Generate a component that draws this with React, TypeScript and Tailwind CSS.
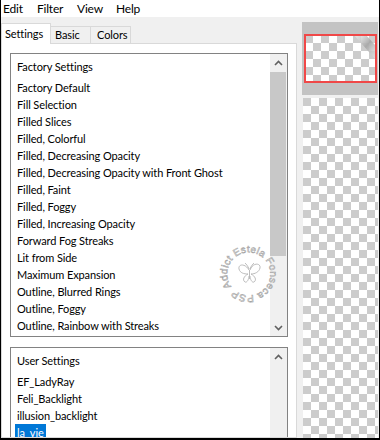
import React from "react";

const factory = [
  "Factory Default",
  "Fill Selection",
  "Filled Slices",
  "Filled, Colorful",
  "Filled, Decreasing Opacity",
  "Filled, Decreasing Opacity with Front Ghost",
  "Filled, Faint",
  "Filled, Foggy",
  "Filled, Increasing Opacity",
  "Forward Fog Streaks",
  "Lit from Side",
  "Maximum Expansion",
  "Outline, Blurred Rings",
  "Outline, Foggy",
  "Outline, Rainbow with Streaks",
];
const user = ["EF_LadyRay", "Feli_Backlight", "illusion_backlight", "la_vie"];

function Chevron({ dir }: { dir: "up" | "down" }) {
  return (
    <svg width="9" height="6" viewBox="0 0 9 6">
      <path
        d={dir === "up" ? "M1 5 L4.5 1.5 L8 5" : "M1 1 L4.5 4.5 L8 1"}
        fill="none"
        stroke="#606060"
        strokeWidth="1.6"
      />
    </svg>
  );
}

function ListBox({
  title,
  items,
  selected,
  full,
}: {
  title: string;
  items: string[];
  selected?: string;
  full?: boolean;
}) {
  return (
    <div
      className={
        full
          ? "flex h-[284px] border border-[#828282] shrink-0"
          : "flex h-[120px] mt-[10px] border border-[#828282] shrink-0"
      }
    >
      <div className="flex-1 pl-[4px] pt-[4px] bg-white">
        <div className="h-[17px] px-[2px]">{title}</div>
        <div className="mt-[4px]">
          {items.map((it) => (
            <div key={it} className="h-[17px]">
              <span
                className={
                  it === selected
                    ? "inline-block h-[17px] px-[2px] bg-[#0078d7] text-white"
                    : "inline-block h-[17px] px-[2px]"
                }
              >
                {it}
              </span>
            </div>
          ))}
        </div>
      </div>
      <div className="w-[17px] bg-[#f0f0f0] flex flex-col">
        <div className="h-[17px] flex items-center justify-center">
          <Chevron dir="up" />
        </div>
        {full && (
          <>
            <div className="mt-[1px] h-[184px] mr-[1px] bg-[#c8c8c8]" />
            <div className="flex-1" />
            <div className="h-[17px] flex items-center justify-center">
              <Chevron dir="down" />
            </div>
          </>
        )}
      </div>
    </div>
  );
}

function Watermark() {
  return (
    <svg
      className="absolute left-[218px] top-[245px] pointer-events-none"
      width="62"
      height="62"
      viewBox="0 0 62 62"
    >
      <defs>
        <path
          id="wmcircle"
          d="M 12.4 41.5 A 21.5 21.5 0 1 1 49.6 20.5 A 21.5 21.5 0 0 1 12.4 41.5"
        />
      </defs>
      <text
        fontSize="10"
        fontFamily="'Liberation Sans', sans-serif"
        fill="#fbfbfb"
        stroke="#a4a4a4"
        strokeWidth="0.55"
      >
        <textPath href="#wmcircle" textLength="130" lengthAdjust="spacing">
          Addict Estela Fonseca PSP
        </textPath>
      </text>
      <g fill="none" stroke="#b4b4b4" strokeWidth="0.9">
        <path d="M30 25 C 26 18, 19 19, 20 24 C 21 28, 25 29, 29 29 C 25 31, 23 35, 26 37 C 28 38, 30 34, 30 31" />
        <path d="M31 25 C 34 17, 42 18, 41 23 C 40 27, 36 29, 32 29 C 36 31, 38 35, 35 37 C 33 38, 31 34, 31 31" />
        <path d="M30.5 25 L 30.5 34" />
        <path d="M30 24 C 29 21, 27 19, 26 18 M31 24 C 32 21, 34 19, 35 18" />
      </g>
    </svg>
  );
}

function Thumb() {
  return (
    <svg width="76" height="73" viewBox="0 0 76 73" className="block">
      <defs>
        <pattern id="chk" x="3" y="13" width="16" height="16" patternUnits="userSpaceOnUse">
          <rect width="16" height="16" fill="#ffffff" />
          <rect width="8" height="8" fill="#cccccc" />
          <rect x="8" y="8" width="8" height="8" fill="#cccccc" />
        </pattern>
        <linearGradient id="streak" x1="0" y1="0" x2="1" y2="1">
          <stop offset="0" stopColor="#f4f4f4" stopOpacity="0.7" />
          <stop offset="0.5" stopColor="#a8a8a8" stopOpacity="0.95" />
          <stop offset="1" stopColor="#e8e8e8" stopOpacity="0.7" />
        </linearGradient>
      </defs>
      <rect width="76" height="73" fill="#c3c3c3" />
      <rect x="3" y="13" width="71" height="47" fill="url(#chk)" />
      <polygon points="52,13 64,13 74,24 74,38" fill="url(#streak)" />
      <rect x="3" y="13" width="71" height="47" fill="none" stroke="#f04848" strokeWidth="2" />
    </svg>
  );
}

export default function App() {
  return (
    <div className="relative w-[380px] h-[440px] overflow-hidden bg-[#f0f0f0] border-l border-r border-b-2 border-black flex flex-col font-['Lato',sans-serif] text-[11px] tracking-[-0.1px] leading-[17px] text-black">
      <div className="h-[17px] bg-white flex pl-[2px] shrink-0 text-[12px] tracking-[-0.2px]">
        <span className="w-[34px]">Edit</span>
        <span className="w-[40px]">Filter</span>
        <span className="w-[39px]">View</span>
        <span>Help</span>
      </div>
      <div className="flex flex-1 min-h-0">
        <div className="w-[296px] flex flex-col">
          <div className="h-[26px] flex items-end shrink-0">
            <div className="relative z-10 -mb-[1px] w-[50px] h-[21px] bg-white border border-b-0 border-[#d9d9d9] pl-[3px] pt-[1px]">
              Settings
            </div>
            <div className="w-[40px] h-[17px] border border-l-0 border-b-0 border-[#d9d9d9] pl-[4px] leading-[16px]">
              Basic
            </div>
            <div className="w-[40px] h-[17px] border border-l-0 border-b-0 border-[#d9d9d9] pl-[6px] leading-[16px]">
              Colors
            </div>
          </div>
          <div className="flex-1 min-h-0 overflow-hidden bg-white border border-[#d9d9d9] pl-[8px] pr-[8px] pt-[9px] flex flex-col">
            <ListBox title="Factory Settings" items={factory} full />
            <ListBox title="User Settings" items={user} selected="la_vie" />
          </div>
        </div>
        <div className="flex-1 flex flex-col pl-[5px] pt-[5px]">
          <Thumb />
          <div className="mt-[3px] ml-[1px] w-[75px] flex-1 bg-[image:conic-gradient(#ffffff_25%,#cccccc_0_50%,#ffffff_0_75%,#cccccc_0)] bg-[length:16px_16px]" />
        </div>
      </div>
      <Watermark />
    </div>
  );
}
